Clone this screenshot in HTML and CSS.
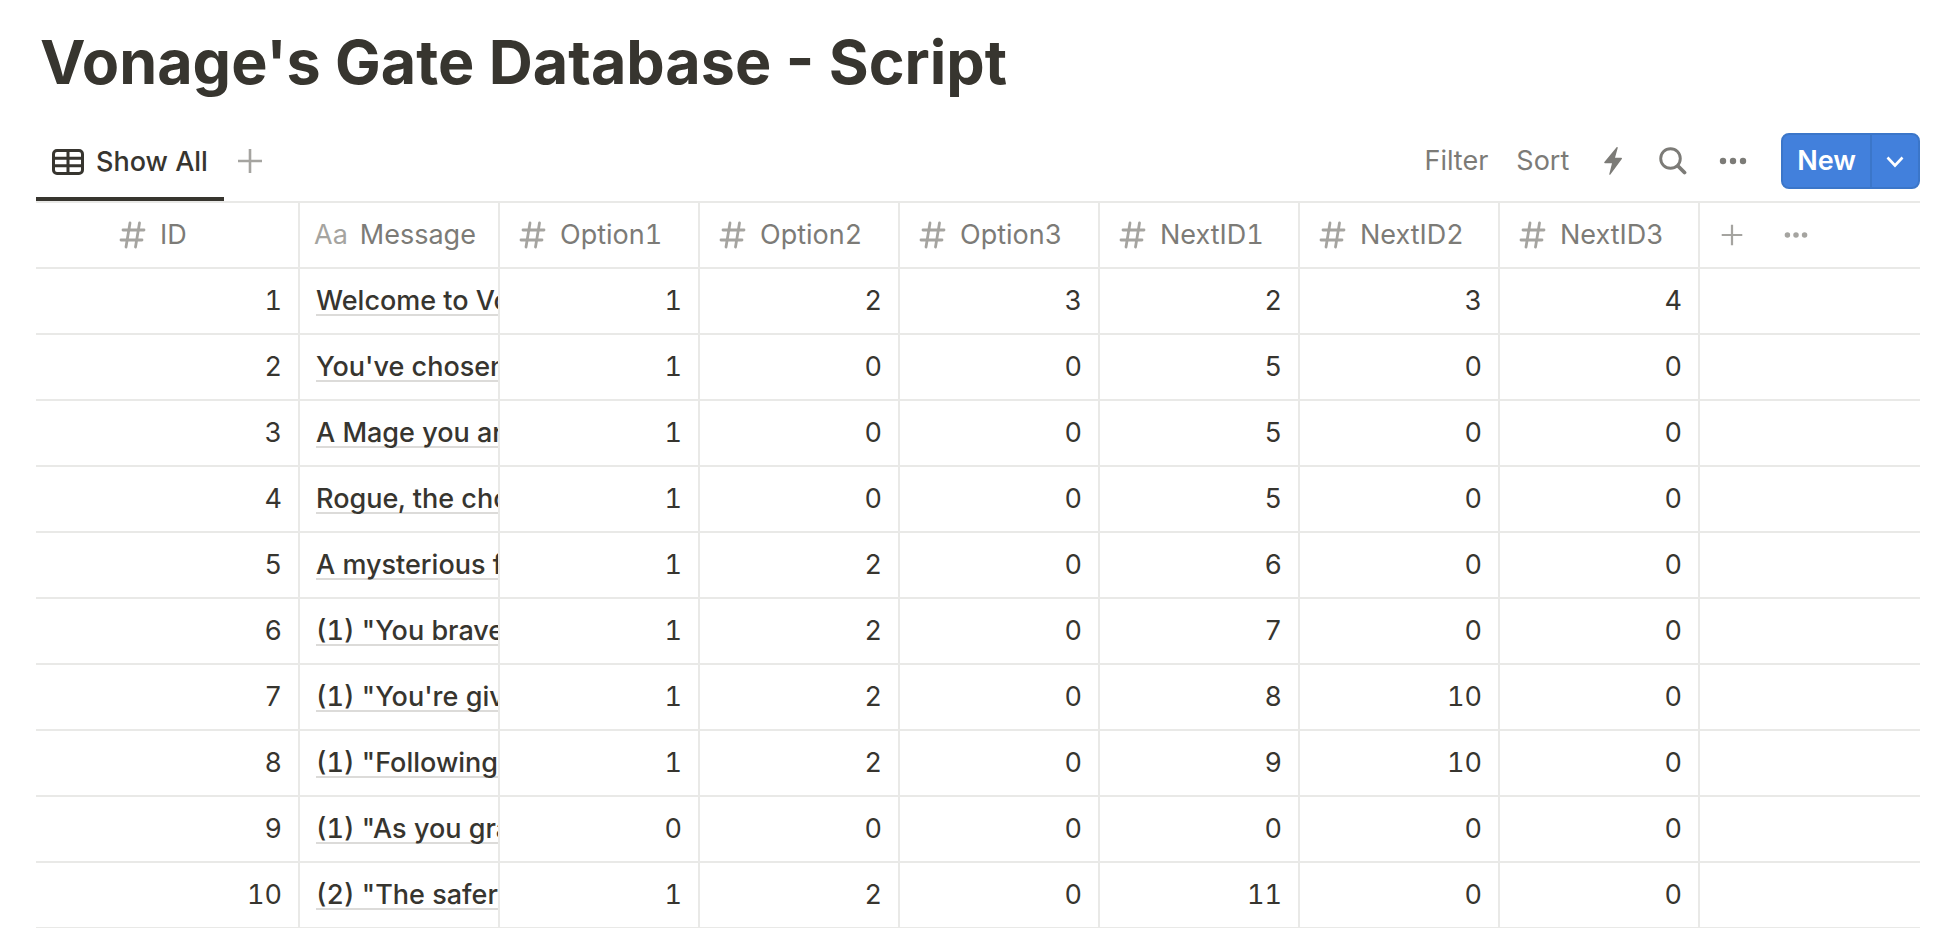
FILE: index.html
```
<!DOCTYPE html>
<html lang="en">
<head>
    <meta charset="UTF-8">
    <meta name="viewport" content="width=device-width, initial-scale=1.0">
    <title>Vonage's Gate Database - Script</title>
    <link rel="stylesheet" href="styles.css">
</head>
<body>
    <!-- Shared icons -->
    <svg class="sprite" aria-hidden="true">
        <symbol id="hash" viewBox="0 0 28 28">
            <path d="M12 2 8 26M21.5 2l-4 24M5 9h21M3 19h21" fill="none" stroke="currentColor" stroke-width="2.8" stroke-linecap="round"/>
        </symbol>
        <symbol id="plus" viewBox="0 0 28 28">
            <path d="M14 2v24M2 14h24" fill="none" stroke="currentColor" stroke-width="2.6"/>
        </symbol>
        <symbol id="dots" viewBox="0 0 28 28">
            <circle cx="4" cy="14" r="3.2"/>
            <circle cx="14" cy="14" r="3.2"/>
            <circle cx="24" cy="14" r="3.2"/>
        </symbol>
    </svg>

    <main class="page">
        <h1 class="title">Vonage's Gate Database - Script</h1>

        <div class="toolbar">
            <button class="tab">
                <svg class="icon-table" viewBox="0 0 32 26" aria-hidden="true">
                    <rect x="1.5" y="1.5" width="29" height="23" rx="3.5"/>
                    <path d="M2 9.2h28M2 16.8h28M16 2v22"/>
                </svg>
                <span>Show All</span>
            </button>
            <button class="add-view" aria-label="Add view"><svg class="icon"><use href="#plus"/></svg></button>

            <div class="actions">
                <button class="action">Filter</button>
                <button class="action">Sort</button>
                <button class="action icon-action" aria-label="Automations">
                    <svg class="icon" viewBox="0 0 28 28"><path d="M17.6.2c.6-.5 1.3-.1 1.1.7L16 10.8h6.2c.8 0 1 .7.6 1.2L11.4 27.5c-.6.7-1.4.3-1.1-.5l2.7-10.8H6c-.8 0-1-.7-.6-1.2z"/></svg>
                </button>
                <button class="action icon-action" aria-label="Search">
                    <svg class="icon" viewBox="0 0 28 28"><circle cx="11.5" cy="11.5" r="9.8" fill="none" stroke="currentColor" stroke-width="2.9"/><path d="m19 19 6.5 6.5" stroke="currentColor" stroke-width="3.8" stroke-linecap="round"/></svg>
                </button>
                <button class="action icon-action" aria-label="More"><svg class="icon"><use href="#dots"/></svg></button>
                <div class="new">
                    <button class="new-button">New</button>
                    <button class="new-arrow" aria-label="Templates">
                        <svg class="icon-arrow" viewBox="0 0 18 18"><path d="m1.5 5.5 7.5 8 7.5-8" fill="none" stroke="currentColor" stroke-width="2.6"/></svg>
                    </button>
                </div>
            </div>
        </div>

        <table class="database">
            <colgroup>
                <col class="col-id">
                <col class="col" span="7">
                <col>
            </colgroup>
            <thead>
                <tr>
                    <th class="id"><div class="head"><svg class="icon"><use href="#hash"/></svg>ID</div></th>
                    <th class="message"><div class="head"><span class="type">Aa</span>Message</div></th>
                    <th><div class="head"><svg class="icon"><use href="#hash"/></svg>Option1</div></th>
                    <th><div class="head"><svg class="icon"><use href="#hash"/></svg>Option2</div></th>
                    <th><div class="head"><svg class="icon"><use href="#hash"/></svg>Option3</div></th>
                    <th><div class="head"><svg class="icon"><use href="#hash"/></svg>NextID1</div></th>
                    <th><div class="head"><svg class="icon"><use href="#hash"/></svg>NextID2</div></th>
                    <th><div class="head"><svg class="icon"><use href="#hash"/></svg>NextID3</div></th>
                    <th>
                        <div class="column-tools">
                            <button aria-label="Add column"><svg class="icon-small"><use href="#plus"/></svg></button>
                            <button aria-label="Column options"><svg class="icon-small"><use href="#dots"/></svg></button>
                        </div>
                    </th>
                </tr>
            </thead>
            <tbody>
                <tr><td>1</td><td class="text"><a href="#">Welcome to Vonage</a></td><td>1</td><td>2</td><td>3</td><td>2</td><td>3</td><td>4</td><td></td></tr>
                <tr><td>2</td><td class="text"><a href="#">You've chosen</a></td><td>1</td><td>0</td><td>0</td><td>5</td><td>0</td><td>0</td><td></td></tr>
                <tr><td>3</td><td class="text"><a href="#">A Mage you are</a></td><td>1</td><td>0</td><td>0</td><td>5</td><td>0</td><td>0</td><td></td></tr>
                <tr><td>4</td><td class="text"><a href="#">Rogue, the choice</a></td><td>1</td><td>0</td><td>0</td><td>5</td><td>0</td><td>0</td><td></td></tr>
                <tr><td>5</td><td class="text"><a href="#">A mysterious figure</a></td><td>1</td><td>2</td><td>0</td><td>6</td><td>0</td><td>0</td><td></td></tr>
                <tr><td>6</td><td class="text"><a href="#">(1) "You brave the</a></td><td>1</td><td>2</td><td>0</td><td>7</td><td>0</td><td>0</td><td></td></tr>
                <tr><td>7</td><td class="text"><a href="#">(1) "You're given</a></td><td>1</td><td>2</td><td>0</td><td>8</td><td>10</td><td>0</td><td></td></tr>
                <tr><td>8</td><td class="text"><a href="#">(1) "Following the</a></td><td>1</td><td>2</td><td>0</td><td>9</td><td>10</td><td>0</td><td></td></tr>
                <tr><td>9</td><td class="text"><a href="#">(1) "As you grab</a></td><td>0</td><td>0</td><td>0</td><td>0</td><td>0</td><td>0</td><td></td></tr>
                <tr><td>10</td><td class="text"><a href="#">(2) "The safer path</a></td><td>1</td><td>2</td><td>0</td><td>11</td><td>0</td><td>0</td><td></td></tr>
            </tbody>
        </table>
    </main>
</body>
</html>
```
FILE: styles.css
```
* {
    box-sizing: border-box;
}

body {
    margin: 0;
    overflow: hidden;
    background: #ffffff;
    color: #37352f;
    font-family: "Inter", sans-serif;
    font-size: 27px;
    line-height: 40px;
}

button {
    padding: 0;
    border: none;
    background: none;
    color: inherit;
    font: inherit;
    cursor: pointer;
}

svg {
    display: block;
    flex: none;
    fill: currentColor;
}

.sprite {
    position: absolute;
    width: 0;
    height: 0;
}

.icon {
    width: 28px;
    height: 28px;
}

.icon-small {
    width: 24px;
    height: 24px;
}

.page {
    padding: 24px 26px 0 36px;
}

.title {
    margin: 0;
    padding-left: 4px;
    font-size: 61px;
    font-weight: 700;
    line-height: 76px;
}

.toolbar {
    display: flex;
    align-items: center;
    height: 103px;
    padding-top: 21px;
    border-bottom: 2px solid #e9e9e7;
}

.tab {
    display: flex;
    align-items: center;
    align-self: stretch;
    gap: 12px;
    padding: 6px 16px 0;
    border-bottom: 4px solid #37352f;
    font-weight: 500;
}

.icon-table {
    width: 32px;
    height: 26px;
    fill: none;
    stroke: currentColor;
    stroke-width: 3;
}

.add-view {
    padding-left: 12px;
    color: #a5a4a0;
}

.actions {
    display: flex;
    align-items: center;
    gap: 28px;
    margin-left: auto;
    color: #7c7b77;
}

.icon-action {
    padding: 0 2px;
}

.new {
    display: flex;
    height: 56px;
    margin-left: 4px;
    border: 2px solid #3b76c9;
    border-radius: 8px;
    background: #4280dc;
    color: #ffffff;
}

.new-button {
    padding: 0 14px;
    font-weight: 600;
}

.new-arrow {
    padding: 0 14px;
    border-left: 2px solid #3b76c9;
}

.icon-arrow {
    width: 18px;
    height: 18px;
}

.database {
    width: 100%;
    border-collapse: separate;
    border-spacing: 0;
    font-variant-numeric: tabular-nums;
    table-layout: fixed;
}

.col-id {
    width: 264px;
}

.col {
    width: 200px;
}

th,
td {
    height: 66px;
    padding: 0 16px;
    border-right: 2px solid #e9e9e7;
    border-bottom: 2px solid #e9e9e7;
    text-align: right;
}

th:last-child,
td:last-child {
    border-right: none;
}

th {
    padding: 0 18px;
    color: #7c7b77;
    font-weight: 400;
    text-align: left;
}

th.id {
    padding-left: 82px;
}

th.message {
    padding: 0 14px;
}

.head {
    display: flex;
    align-items: center;
    gap: 14px;
}

.message .head {
    gap: 12px;
}

.head .icon,
.type,
.column-tools {
    color: #a5a4a0;
}

.column-tools {
    display: flex;
    align-items: center;
    gap: 40px;
    padding-left: 2px;
}

.database .text {
    overflow: hidden;
    padding-right: 0;
    text-align: left;
    white-space: nowrap;
}

.text a {
    color: inherit;
    font-weight: 500;
    text-decoration: underline 2px #dcdbd9;
    text-decoration-skip-ink: none;
    text-underline-offset: 4px;
}
```
